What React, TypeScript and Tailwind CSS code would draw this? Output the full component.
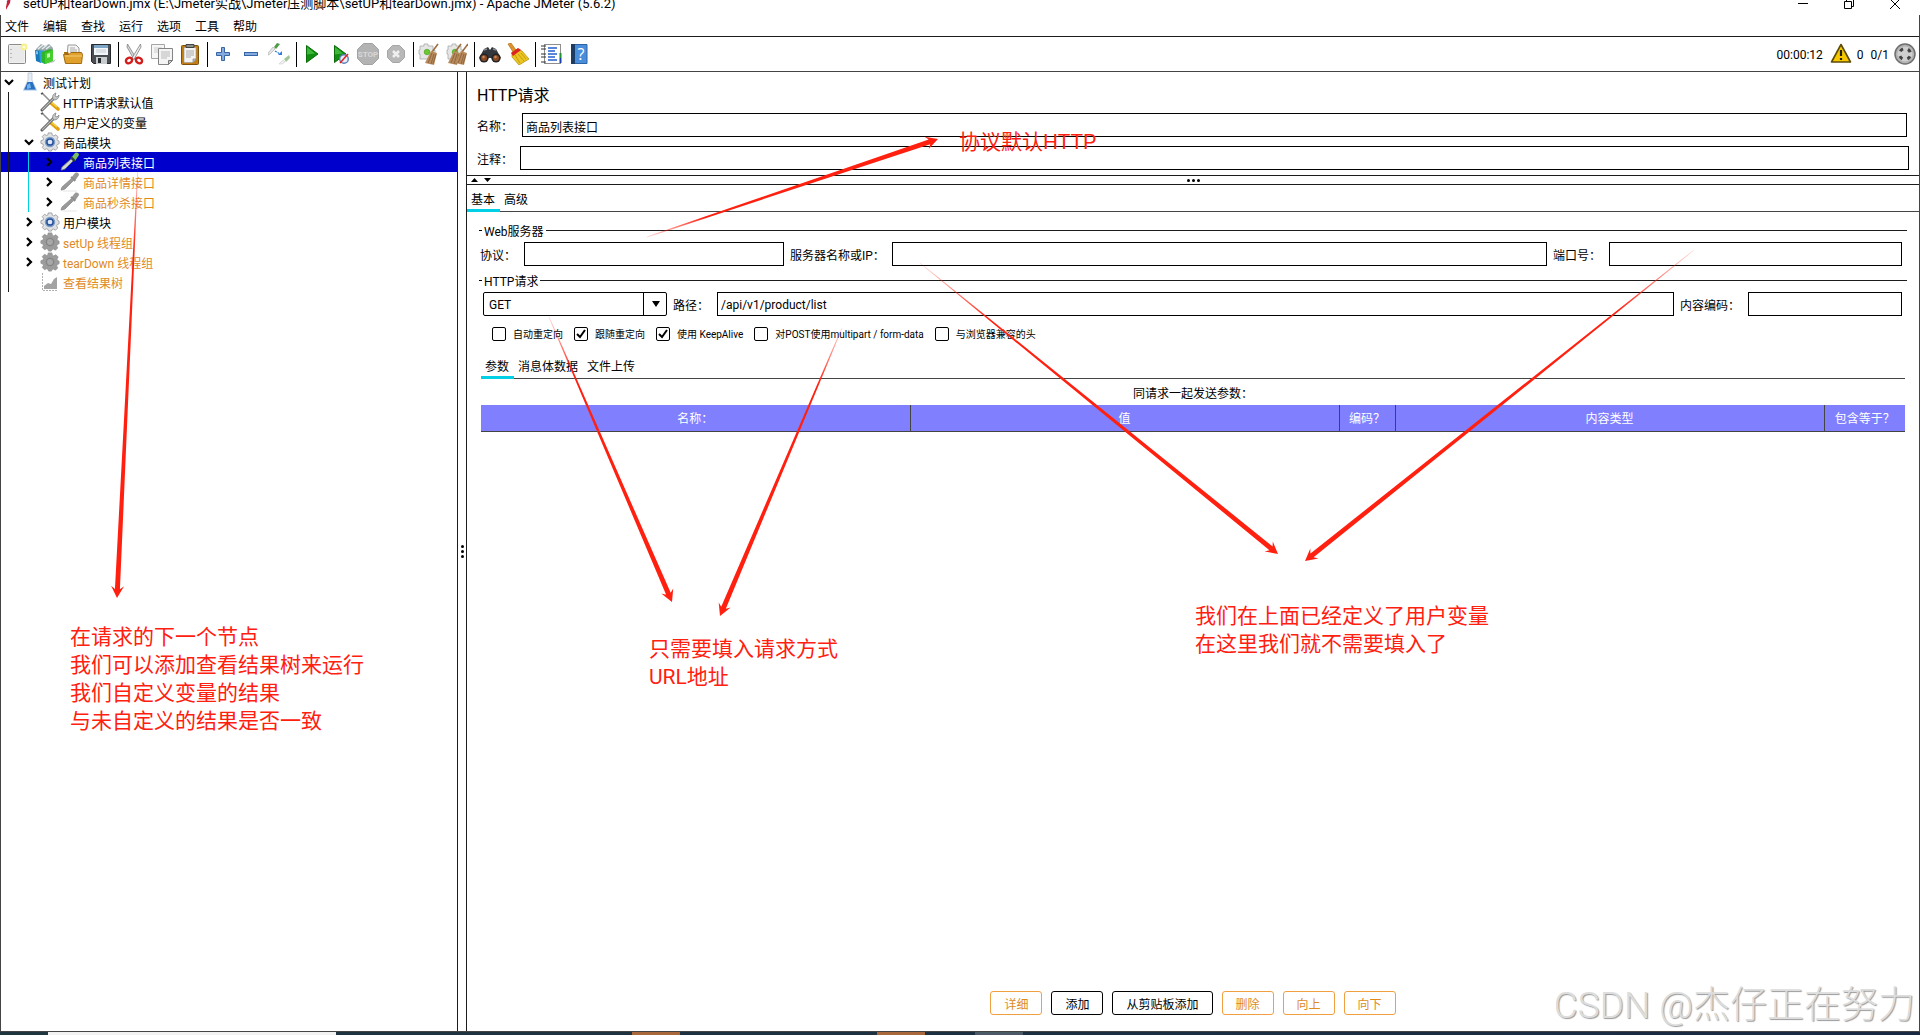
import React from 'react';
import clsx from 'clsx';

type IconProps = { children: React.ReactNode; size?: number; box?: string };

function Icon({ children, size = 22, box = '0 0 22 22' }: IconProps) {
  return (
    <svg width={size} height={size} viewBox={box} fill="none" aria-hidden="true" className="shrink-0">
      {children}
    </svg>
  );
}

/* ---------- toolbar icons ---------- */

const NewIcon = () => (
  <Icon>
    <rect x="2.5" y="1.5" width="17" height="19" rx="1" fill="#f0f0f0" stroke="#8a8a8a" />
    <path d="M4 3h14v16H4z" fill="#e9e9e9" />
    <path d="M5 6v1M5 10v1M5 14v1" stroke="#888" />
    <circle cx="18" cy="4" r="3.4" fill="#f7ef8a" />
    <circle cx="18" cy="4" r="1.6" fill="#fffde0" />
  </Icon>
);

const TemplatesIcon = () => (
  <Icon>
    <path d="M2 6l5-5 4 2 4-2 4 4v5H2z" fill="#9aa7ab" />
    <path d="M4 6l5-4M8 6l5-4M12 6l4-3" stroke="#e8eef0" strokeWidth="1.4" />
    <path d="M1 7l6 1v12l-5-2z" fill="#1878b8" />
    <path d="M2 8l2 .5v3L2 11z" fill="#7cc6ee" />
    <path d="M5 7l6 1v13l-5-2z" fill="#2f9fd8" />
    <path d="M8 9l8-3 3 1v11l-8 3-3-2z" fill="#2fb52a" />
    <path d="M11 10l8-3v11l-8 3z" fill="#45cf2c" />
    <path d="M13 11l3-1v4l-3 1z" fill="#c8f5b4" />
    <path d="M19 18l3-2-2 3-7 2z" fill="#bbb" />
  </Icon>
);

const OpenIcon = () => (
  <Icon>
    <path d="M6 2h8l3 3v9H5z" fill="#f4f4f4" stroke="#999" />
    <path d="M8 5h5M8 7h7M8 9h7" stroke="#aaa" />
    <path d="M2 9h4l1 2h12v9H3z" fill="#a8690b" />
    <path d="M1.5 11.5H7l2-2h10.500l1 2-1 9h-16z" fill="#dfa02c" stroke="#a36c10" />
    <path d="M3 13h17" stroke="#f4cd76" />
  </Icon>
);

const SaveIcon = () => (
  <Icon>
    <path d="M1.500 1.500h19v19h-17l-2-2z" fill="#4a4d52" stroke="#26282b" />
    <rect x="4" y="2" width="14" height="10" fill="#f3f6f8" />
    <rect x="4" y="2" width="14" height="3" fill="#7ea6c6" />
    <path d="M6 7h10M6 9h10" stroke="#c3ccd2" />
    <rect x="6" y="14" width="11" height="7" fill="#c9ccce" />
    <rect x="8" y="15" width="3" height="5" fill="#26282b" />
  </Icon>
);

const CutIcon = () => (
  <Icon>
    <path d="M4.500 1l8.500 14-2 1.500L4 4z" fill="#d5d7d8" stroke="#7d8083" strokeWidth=".8" />
    <path d="M17.500 1L9 15l2 1.500L18 4z" fill="#eceded" stroke="#7d8083" strokeWidth=".8" />
    <ellipse cx="6" cy="17.500" rx="3.200" ry="2.600" transform="rotate(-30 6 17.500)" stroke="#d41c1c" strokeWidth="2.400" />
    <ellipse cx="16" cy="17.500" rx="3.200" ry="2.600" transform="rotate(30 16 17.500)" stroke="#d41c1c" strokeWidth="2.400" />
  </Icon>
);

const CopyIcon = () => (
  <Icon>
    <path d="M.5 1.500h13v14H.5z" fill="#f6f6f6" stroke="#a5a5a5" />
    <path d="M3 5h8M3 7h8M3 9h8" stroke="#ccc" />
    <path d="M7.500 5.500h14v12l-4 4h-10z" fill="#f4f4f4" stroke="#858585" />
    <path d="M10 9h9M10 11h9M10 13h9M10 15h6" stroke="#b9b9b9" />
    <path d="M21.500 17.500l-4 4v-4z" fill="#ccc" stroke="#777" />
  </Icon>
);

const PasteIcon = () => (
  <Icon>
    <rect x="2.500" y="2.500" width="17" height="19" rx="1" fill="#c17d11" stroke="#7c5008" />
    <path d="M5 4.500h12v12l-3 3H5z" fill="#f4f4f4" stroke="#999" strokeWidth=".6" />
    <path d="M7 1.500h8v3H7z" fill="#8a8d88" stroke="#444" />
    <path d="M7 8h8M7 10h8M7 12h8M7 14h5" stroke="#aaa" />
    <path d="M17 16l-3 3.500V16z" fill="#c8c8c8" stroke="#777" strokeWidth=".6" />
  </Icon>
);

const PlusIcon = () => (
  <Icon>
    <path d="M9.500 4.500h3v5h5v3h-5v5h-3v-5h-5v-3h5z" fill="#86aadb" stroke="#3465a4" />
  </Icon>
);

const MinusIcon = () => (
  <Icon>
    <rect x="4.500" y="9.500" width="13" height="3" fill="#86aadb" stroke="#3465a4" />
  </Icon>
);

const ToggleIcon = () => (
  <Icon>
    <path d="M0 10l5-6 2 2-5 5-2 1z" fill="#e4e6e4" stroke="#a6a9a6" strokeWidth=".6" />
    <path d="M6 4l3-4 3 1-4 5z" fill="#4f9a45" />
    <path d="M11 21l4-4 2 2-3 2z" fill="#efefef" stroke="#ccc" strokeWidth=".6" />
    <path d="M16 16l5-4 1 3-4 4z" fill="#9cc694" />
    <path d="M7 8l5 3" stroke="#2c7be0" strokeWidth="1.200" strokeDasharray="2 1" />
    <path d="M10 12h4V8z" fill="#2c7be0" />
  </Icon>
);

const StartIcon = () => (
  <Icon>
    <path d="M5.500 2.500L17 11 5.500 19.500z" fill="#118d11" stroke="#0a6d0a" />
    <path d="M6 4l8 6.500-8 1z" fill="#3eb83a" />
  </Icon>
);

const StartNoTimersIcon = () => (
  <Icon>
    <path d="M5.500 2.500L17 11 5.500 19.500z" fill="#118d11" stroke="#0a6d0a" />
    <path d="M6 4l8 6.500-8 1z" fill="#3eb83a" />
    <circle cx="15" cy="16" r="4.300" fill="#e6eefb" stroke="#5b7fb5" strokeWidth="1.400" />
    <path d="M11 20l8-9" stroke="#e0241c" strokeWidth="1.500" />
  </Icon>
);

const StopIcon = () => (
  <Icon>
    <path d="M6.500.5h9l6 6v9l-6 6h-9l-6-6v-9z" fill="#b3b3b3" stroke="#a2a2a2" />
    <text x="11" y="14" textAnchor="middle" fontSize="8" fontWeight="700" fontFamily="Roboto, sans-serif" fill="#d8d8d8">
      STOP
    </text>
  </Icon>
);

const ShutdownIcon = () => (
  <Icon>
    <path d="M7.500 2.500h7l5 5v7l-5 5h-7l-5-5v-7z" fill="#b8b8b8" stroke="#a6a6a6" />
    <path d="M8 8l6 6M14 8l-6 6" stroke="#efefef" strokeWidth="2.600" />
  </Icon>
);

const broom = (
  <>
    <path d="M14 9l6-8" stroke="#9c6d3c" strokeWidth="1.600" />
    <path d="M13 8l6 2-3 12-9-2z" fill="#b98a5b" />
    <path d="M14 10l-4 10M16 11l-3 10M18 11l-3 10" stroke="#7d5630" strokeWidth=".7" />
  </>
);

const gearSheet = (
  <>
    <path d="M2 3h4V1h4v2h5v4h2v4h-2v5H2v-5H1V7h1z" fill="#e6e6e6" stroke="#aaa" strokeWidth=".8" />
    <circle cx="9" cy="9" r="2.800" fill="#6cc830" stroke="#3f9a18" strokeWidth=".6" />
  </>
);

const ClearIcon = () => (
  <Icon>
    {gearSheet}
    {broom}
  </Icon>
);

const ClearAllIcon = () => (
  <Icon>
    {gearSheet}
    <g transform="translate(-5 0)">{broom}</g>
    <g transform="translate(2 0)">{broom}</g>
  </Icon>
);

const SearchIcon = () => (
  <Icon>
    <path d="M5 6l4-2 2 3 2-3 4 2 5 9-5 3-5-3h-2l-5 3-5-3z" fill="#33363a" />
    <path d="M5 7l3-1M14 6l3 1" stroke="#83888d" strokeWidth="1.500" />
    <circle cx="5" cy="15" r="4.600" fill="#222427" />
    <circle cx="17" cy="15" r="4.600" fill="#222427" />
    <circle cx="5" cy="15" r="3" fill="#8c4a22" />
    <circle cx="17" cy="15" r="3" fill="#8c4a22" />
    <circle cx="4.500" cy="14" r="1.200" fill="#c98a5e" />
    <circle cx="16.500" cy="14" r="1.200" fill="#c98a5e" />
  </Icon>
);

const ResetSearchIcon = () => (
  <Icon>
    <path d="M1 1l3-1 5 7-3 2z" fill="#e0932a" stroke="#a5660f" strokeWidth=".6" />
    <path d="M5 9l6-3 4 2 7 8-10 6-7-8z" fill="#edc521" stroke="#b08a0a" strokeWidth=".7" />
    <path d="M8 12l5 8M11 11l6 7M14 10l5 6" stroke="#b8920e" strokeWidth=".8" />
    <path d="M4 10l7-5 3 2-8 6z" fill="#dc2323" />
  </Icon>
);

const FunctionIcon = () => (
  <Icon>
    <rect x="4.500" y="1.500" width="16" height="19" fill="#fff" stroke="#8e8e8e" />
    <path d="M20.500 10v5" stroke="#1d8f2e" strokeWidth="2" />
    <path d="M20.500 15v5" stroke="#163fb0" strokeWidth="2" />
    <path d="M8 5h9M8 11h9M8 17h9" stroke="#235fd0" strokeWidth="1.300" />
    <path d="M8 8h7M8 14h7" stroke="#235fd0" strokeWidth="1.300" />
    <path d="M1 3h5M1 6h5M1 11h5M1 14h5M1 19h5" stroke="#333" strokeWidth="1.200" />
  </Icon>
);

const HelpIcon = () => (
  <Icon>
    <rect x="3" y="1" width="16" height="20" fill="#4a8edb" />
    <rect x="3" y="1" width="4" height="20" fill="#1c3c66" />
    <path d="M7 1.500h12v19H7" stroke="#2b62a5" />
    <text x="13" y="17" textAnchor="middle" fontSize="16" fontFamily="Open Sans, sans-serif" fill="#fff">
      ?
    </text>
  </Icon>
);

const toolGroups: { label: string; icon: React.ReactNode; off?: boolean }[][] = [
  [
    { label: '新建', icon: <NewIcon /> },
    { label: '模板', icon: <TemplatesIcon /> },
    { label: '打开', icon: <OpenIcon /> },
    { label: '保存', icon: <SaveIcon /> },
  ],
  [
    { label: '剪切', icon: <CutIcon /> },
    { label: '复制', icon: <CopyIcon /> },
    { label: '粘贴', icon: <PasteIcon /> },
  ],
  [
    { label: '展开', icon: <PlusIcon /> },
    { label: '折叠', icon: <MinusIcon /> },
    { label: '切换', icon: <ToggleIcon /> },
  ],
  [
    { label: '启动', icon: <StartIcon /> },
    { label: '不停顿开始', icon: <StartNoTimersIcon /> },
    { label: '停止', icon: <StopIcon />, off: true },
    { label: '关闭', icon: <ShutdownIcon />, off: true },
  ],
  [
    { label: '清除', icon: <ClearIcon /> },
    { label: '清除全部', icon: <ClearAllIcon /> },
  ],
  [
    { label: '搜索', icon: <SearchIcon /> },
    { label: '重置搜索', icon: <ResetSearchIcon /> },
  ],
  [
    { label: '函数助手', icon: <FunctionIcon /> },
    { label: '帮助', icon: <HelpIcon /> },
  ],
];

/* ---------- tree icons ---------- */

const FlaskIcon = () => (
  <Icon size={20} box="0 0 20 20">
    <path d="M8 1h4v7l4 9H4l4-9z" fill="#e4edf6" stroke="#b5c0cc" strokeWidth=".7" />
    <path d="M7.500 10h5l3.500 8H4z" fill="#2a6fc0" />
    <path d="M7 13l3-2 1 5-4 1z" fill="#6fb2ee" />
    <path d="M3 18h14" stroke="#9cc3ea" />
  </Icon>
);

const ToolsIcon = () => (
  <Icon size={20} box="0 0 20 20">
    <path d="M2 1l9 9" stroke="#8f8f8f" strokeWidth="1.600" />
    <path d="M1 2l2-1" stroke="#555" strokeWidth="1.600" />
    <path d="M11 11l7 6" stroke="#e0a010" strokeWidth="3.600" strokeLinecap="round" />
    <path d="M11 10l6 5" stroke="#f8d548" strokeWidth="1.200" />
    <path d="M2 18L14 6" stroke="#555" strokeWidth="3" strokeLinecap="round" />
    <path d="M2 18L14 6" stroke="#b9bcbd" strokeWidth="1.300" />
    <path d="M13 7c-1-3 0-5 3-6l-1 3 2 1 2-2c0 3-2 5-5 5z" fill="#c9cccd" stroke="#777" strokeWidth=".7" />
  </Icon>
);

const gearPath =
  'M8 0h4l.6 2.600 1.600.7L16.500 2 19 4.500l-1.300 2.300.6 1.500L20 9v3l-2 .7-.7 1.600L18.500 16.500 16 19l-2.300-1.300-1.500.6L11.500 20h-3l-.8-2-1.500-.6L4 18.500 1.500 16l1.300-2.300-.6-1.500L0 11.500V8.600l2.300-.8.6-1.500L1.500 4 4 1.500l2.200 1.300 1.500-.6z';

const GearIcon = () => (
  <Icon size={20} box="-1 -1 22 22">
    <path d={gearPath} fill="#dfe1e3" stroke="#8a8d91" strokeWidth=".8" />
    <circle cx="10" cy="10" r="5" fill="#27539b" stroke="#7f9cc8" strokeWidth="1.500" />
    <circle cx="10" cy="10" r="2.600" fill="#dce8f8" />
  </Icon>
);

const GearOffIcon = () => (
  <Icon size={20} box="-1 -1 22 22">
    <path d={gearPath} fill="#9c9c9c" stroke="#8f8f8f" strokeWidth=".8" />
    <circle cx="10" cy="10" r="4" fill="#a8a8a8" stroke="#858585" strokeWidth="1.500" />
  </Icon>
);

const DropperIcon = ({ off = false }: { off?: boolean }) => (
  <Icon size={20} box="0 0 20 20">
    <path d="M1 18l1-3 9-8 2 2-8 8-3 1z" fill={off ? '#999' : '#d4d8d4'} stroke={off ? '#8c8c8c' : '#6f756f'} strokeWidth=".8" />
    <path d="M11 6l4-5c2-1 4 0 4 2l-4 6z" fill={off ? '#999' : '#7cbf62'} />
    <path d="M11 5l4 4" stroke={off ? '#8c8c8c' : '#2d4a26'} strokeWidth="2" />
    {off && <path d="M3 19h14" stroke="#e4e4e4" />}
  </Icon>
);

const ChartIcon = () => (
  <Icon size={20} box="0 0 20 20">
    <path d="M2.500 1v17.500H18" stroke="#b0b0b0" strokeDasharray="2 1" />
    <path d="M4 14l4-3 3 1 3-5 3-2v12H4z" fill="#a3a3a3" />
  </Icon>
);

type Node = {
  label: string;
  level: 0 | 1 | 2;
  icon: React.ReactNode;
  arrow?: 'open' | 'closed';
  disabled?: boolean;
  selected?: boolean;
};

const nodes: Node[] = [
  { label: '测试计划', level: 0, icon: <FlaskIcon />, arrow: 'open' },
  { label: 'HTTP请求默认值', level: 1, icon: <ToolsIcon /> },
  { label: '用户定义的变量', level: 1, icon: <ToolsIcon /> },
  { label: '商品模块', level: 1, icon: <GearIcon />, arrow: 'open' },
  { label: '商品列表接口', level: 2, icon: <DropperIcon />, arrow: 'closed', selected: true },
  { label: '商品详情接口', level: 2, icon: <DropperIcon off />, arrow: 'closed', disabled: true },
  { label: '商品秒杀接口', level: 2, icon: <DropperIcon off />, arrow: 'closed', disabled: true },
  { label: '用户模块', level: 1, icon: <GearIcon />, arrow: 'closed' },
  { label: 'setUp 线程组', level: 1, icon: <GearOffIcon />, arrow: 'closed', disabled: true },
  { label: 'tearDown 线程组', level: 1, icon: <GearOffIcon />, arrow: 'closed', disabled: true },
  { label: '查看结果树', level: 1, icon: <ChartIcon />, disabled: true },
];

const levelPad = ['pl-0', 'pl-5', 'pl-10'];

function Tree() {
  return (
    <ul className="relative">
      {nodes.map((n) => (
        <li
          key={n.label}
          className={clsx(
            'flex h-5 items-center gap-[3px]',
            levelPad[n.level],
            n.selected && 'bg-[#0000cc] text-white',
            n.disabled && 'text-[#e08a1e]'
          )}
        >
          <span className="flex w-4 justify-center">
            {n.arrow && (
              <svg width="10" height="10" viewBox="0 0 10 10" fill="none" stroke="#000" strokeWidth="2.200">
                <path d={n.arrow === 'open' ? 'M1 3l4 4 4-4' : 'M3 1l4 4-4 4'} />
              </svg>
            )}
          </span>
          {n.icon}
          <span className="pt-[3px] whitespace-nowrap">{n.label}</span>
        </li>
      ))}
      <li aria-hidden="true" className="absolute top-5 bottom-0 left-[7px] w-px bg-[#1c1c1c]" />
      <li aria-hidden="true" className="absolute top-20 left-[27px] h-[60px] w-px bg-[#00d0e0]" />
    </ul>
  );
}

/* ---------- form parts ---------- */

const field = 'h-6 min-w-0 border border-black bg-white px-[3px] pt-0.5 outline-none';
const caption = 'pt-[3px] whitespace-nowrap';

function Tabs({ items }: { items: string[] }) {
  return (
    <div role="tablist" className="flex h-[27px] border-b border-[#444444]">
      {items.map((t, i) => (
        <button
          key={t}
          role="tab"
          aria-selected={i === 0}
          className={clsx(
            'h-[27px] border-b-3 pt-1.5 pr-[5px] pl-1 leading-[18px]',
            i === 0 ? 'border-[#00d0e6]' : 'border-transparent'
          )}
        >
          {t}
        </button>
      ))}
    </div>
  );
}

function Group({ title, children }: { title: string; children: React.ReactNode }) {
  return (
    <fieldset className="mb-1.5 min-w-0">
      <legend className="flex h-[17px] w-full items-center gap-0.5">
        <span className="h-px w-[3px] bg-black" />
        <span className="pt-[3px] leading-[17px]">{title}</span>
        <span className="h-px flex-1 bg-[#1c1c1c]" />
      </legend>
      <div className="flex items-center pt-[3px] pr-[5px] pl-px">{children}</div>
    </fieldset>
  );
}

function Check({ label, checked = false }: { label: string; checked?: boolean }) {
  return (
    <label className="flex items-center gap-[7px]">
      <span className="relative h-[14px] w-[14px]">
        <input
          type="checkbox"
          defaultChecked={checked}
          className="peer block h-[14px] w-[14px] appearance-none rounded-[2px] border border-black"
        />
        <svg
          viewBox="0 0 14 14"
          className="pointer-events-none absolute inset-0 hidden peer-checked:block"
          fill="none"
          stroke="#000"
          strokeWidth="2"
        >
          <path d="M3 7l3 3 5-7" />
        </svg>
      </span>
      <span className="pt-0.5 text-[10px] whitespace-nowrap">{label}</span>
    </label>
  );
}

function RequestForm() {
  return (
    <div className="pt-[10px] pr-3 pl-3">
      <Group title="Web服务器">
        <label htmlFor="protocol" className={clsx(caption, 'w-11')}>协议：</label>
        <input id="protocol" className={clsx(field, 'flex-[252]')} />
        <label htmlFor="server" className={clsx(caption, 'w-[108px] pl-1.5')}>服务器名称或IP：</label>
        <input id="server" className={clsx(field, 'flex-[647]')} />
        <label htmlFor="port" className={clsx(caption, 'w-[62px] pl-1.5')}>端口号：</label>
        <input id="port" className={clsx(field, 'flex-[285]')} />
      </Group>
      <Group title="HTTP请求">
        <span className="relative ml-[3px] w-[184px]">
          <select
            aria-label="请求方法"
            defaultValue="GET"
            className="block h-6 w-full appearance-none rounded-[2px] border border-black bg-white pt-0.5 pl-[5px]"
          >
            <option>GET</option>
            <option>POST</option>
          </select>
          <span className="pointer-events-none absolute inset-y-0 right-0 flex w-6 items-center justify-center border-l border-black">
            <svg width="10" height="6" viewBox="0 0 10 6">
              <path d="M1 0h8L5 6z" />
            </svg>
          </span>
        </span>
        <label htmlFor="path" className={clsx(caption, 'w-[50px] pl-1.5')}>路径：</label>
        <input id="path" defaultValue="/api/v1/product/list" className={clsx(field, 'flex-[949]')} />
        <label htmlFor="encoding" className={clsx(caption, 'w-[74px] pl-1.5')}>内容编码：</label>
        <input id="encoding" className={clsx(field, 'flex-[146]')} />
      </Group>

      <div className="mt-[11px] mb-[11px] flex h-[14px] items-center gap-[11px] pl-[13px]">
        <Check label="自动重定向" />
        <Check label="跟随重定向" checked />
        <Check label="使用 KeepAlive" checked />
        <Check label="对POST使用multipart / form-data" />
        <Check label="与浏览器兼容的头" />
      </div>

      <div className="pr-0.5 pl-0.5">
        <Tabs items={['参数', '消息体数据', '文件上传']} />
        <table className="w-full table-fixed border-collapse">
          <caption className="h-[26px] pt-1.5">同请求一起发送参数：</caption>
          <colgroup>
            <col />
            <col />
            <col className="w-14" />
            <col />
            <col className="w-[81px]" />
          </colgroup>
          <thead>
            <tr className="h-[26px] border-b border-[#444444] bg-[#8080ff] text-white">
              {['名称：', '值', '编码？', '内容类型', '包含等于？'].map((h) => (
                <th key={h} scope="col" className="border-r border-[#444444] p-0 pt-[3px] font-normal last:border-r-0">
                  {h}
                </th>
              ))}
            </tr>
          </thead>
        </table>
      </div>
    </div>
  );
}

function RequestPanel() {
  return (
    <main className="flex min-w-0 flex-1 flex-col border-l border-[#1c1c1c]">
      <div className="flex flex-col pt-[10px] pb-[5px] pl-[10px]">
        <h1 className="mb-[5px] pt-0.5 text-[16px] leading-6">HTTP请求</h1>
        <div className="mb-[9px] flex items-center pr-3">
          <label htmlFor="name" className={clsx(caption, 'w-[45px]')}>名称：</label>
          <input id="name" defaultValue="商品列表接口" className={clsx(field, 'flex-1')} />
        </div>
        <div className="flex items-center pr-[10px]">
          <label htmlFor="comment" className={clsx(caption, 'w-[43px]')}>注释：</label>
          <input id="comment" className={clsx(field, 'flex-1')} />
        </div>
      </div>

      <div className="flex h-[10px] items-center border-y border-[#1c1c1c] px-1">
        <div className="flex flex-1 gap-1.5">
          <svg width="7" height="4" viewBox="0 0 7 4"><path d="M0 4h7L3.500 0z" /></svg>
          <svg width="7" height="4" viewBox="0 0 7 4"><path d="M0 0h7L3.500 4z" /></svg>
        </div>
        <div className="flex gap-0.5">
          <span className="h-[3px] w-[3px] rounded-full bg-black" />
          <span className="h-[3px] w-[3px] rounded-full bg-black" />
          <span className="h-[3px] w-[3px] rounded-full bg-black" />
        </div>
        <div className="flex-1" />
      </div>

      <Tabs items={['基本', '高级']} />
      <RequestForm />

      <div className="mt-auto mb-4 flex justify-center gap-[9px]">
        {[
          { t: '详细', off: true },
          { t: '添加' },
          { t: '从剪贴板添加' },
          { t: '删除', off: true },
          { t: '向上', off: true },
          { t: '向下', off: true },
        ].map((b) => (
          <button
            key={b.t}
            disabled={b.off}
            className={clsx(
              'h-6 rounded-[3px] border px-[13px] pt-[3px]',
              b.off ? 'border-[#f0a040] text-[#e08a1e]' : 'border-black'
            )}
          >
            {b.t}
          </button>
        ))}
      </div>
    </main>
  );
}

/* ---------- red notes laid over the window ---------- */

const arrows: [number, number, number, number][] = [
  [138, 165, 117, 598],
  [647, 237, 938, 139],
  [549, 317, 672, 602],
  [842, 328, 720, 616],
  [920, 263, 1278, 554],
  [1694, 250, 1305, 561],
];

function Arrow({ from, to, id }: { from: [number, number]; to: [number, number]; id: string }) {
  const dx = to[0] - from[0];
  const dy = to[1] - from[1];
  const len = Math.hypot(dx, dy);
  const angle = (Math.atan2(dy, dx) * 180) / Math.PI;
  const neck = len - 9;
  return (
    <g transform={`translate(${from[0]} ${from[1]}) rotate(${angle})`}>
      <defs>
        <linearGradient id={id} gradientUnits="userSpaceOnUse" x1="0" y1="0" x2={len} y2="0">
          <stop offset="0" stopColor="#ff2010" stopOpacity="0.15" />
          <stop offset="0.2" stopColor="#ff2010" />
        </linearGradient>
      </defs>
      <path
        fill={`url(#${id})`}
        d={`M0 -.4L${neck} -2.500L${len - 12} -6.500L${len} 0L${len - 12} 6.500L${neck} 2.500L0 .4z`}
      />
    </g>
  );
}

const note = 'absolute whitespace-nowrap text-[21px] leading-7 text-[#ff2010]';

function Notes() {
  return (
    <div className="pointer-events-none absolute inset-0">
      <svg className="absolute inset-0 h-full w-full">
        {arrows.map(([x1, y1, x2, y2], i) => (
          <Arrow key={i} id={`arrow${i}`} from={[x1, y1]} to={[x2, y2]} />
        ))}
      </svg>
      <p className={clsx(note, 'top-[128px] left-[959px]')}>协议默认HTTP</p>
      <p className={clsx(note, 'top-[623px] left-[70px]')}>
        在请求的下一个节点<br />
        我们可以添加查看结果树来运行<br />
        我们自定义变量的结果<br />
        与未自定义的结果是否一致
      </p>
      <p className={clsx(note, 'top-[635px] left-[649px]')}>
        只需要填入请求方式<br />
        URL地址
      </p>
      <p className={clsx(note, 'top-[602px] left-[1195px]')}>
        我们在上面已经定义了用户变量<br />
        在这里我们就不需要填入了
      </p>
      <p className="absolute right-[5px] bottom-0.5 text-[37px] leading-[54px] font-light whitespace-nowrap text-[#dddddd] [text-shadow:1px_1px_1px_#999999]">
        CSDN @杰仔正在努力
      </p>
    </div>
  );
}

/* ---------- window ---------- */

function TitleBar() {
  return (
    <div className="-mt-[7px] flex h-[22px] shrink-0 items-center">
      <svg width="23" height="22" viewBox="0 0 23 22" className="shrink-0">
        <path d="M6 14l1-5 4-6-1 7-3 5-1 2z" fill="#c8203c" />
        <path d="M7 9l3-5" stroke="#7a2a78" />
      </svg>
      <span className="flex-1 text-[13px] whitespace-nowrap">
        setUP和tearDown.jmx (E:\Jmeter实战\Jmeter压测脚本\setUP和tearDown.jmx) - Apache JMeter (5.6.2)
      </span>
      <div className="flex pr-0.5 text-black">
        {[
          { label: '最小化', d: 'M0 4.500h10' },
          { label: '还原', d: 'M.5 2.500h7v7h-7zM2.500 2.500v-2h7v7h-2' },
          { label: '关闭', d: 'M0 0l10 10M10 0L0 10' },
        ].map((c) => (
          <button key={c.label} aria-label={c.label} className="flex w-[46px] justify-center">
            <svg width="10" height="10" viewBox="0 0 10 10" fill="none" stroke="#000">
              <path d={c.d} />
            </svg>
          </button>
        ))}
      </div>
    </div>
  );
}

function Toolbar() {
  return (
    <div className="flex h-[35px] shrink-0 items-center border-b border-[#444444] pl-0.5">
      {toolGroups.map((group, gi) => (
        <React.Fragment key={gi}>
          {gi > 0 && <span className="mr-px ml-[3px] h-[25px] w-px bg-black" />}
          {group.map((tool) => (
            <button key={tool.label} aria-label={tool.label} disabled={tool.off} className="flex w-7 justify-center">
              {tool.icon}
            </button>
          ))}
        </React.Fragment>
      ))}
      <div className="ml-auto flex items-center pr-[3px]">
        <span className="pt-0.5">00:00:12</span>
        <button aria-label="日志" className="mr-[5px] ml-[7px]">
          <Icon>
            <path d="M11 1.500L20.500 19h-19z" fill="#f7c800" stroke="#5c4a08" strokeWidth="1.600" strokeLinejoin="round" />
            <path d="M11 7v6M11 15v2" stroke="#222" strokeWidth="2.200" />
          </Icon>
        </button>
        <span className="mr-[7px] pt-0.5">0</span>
        <span className="mr-[5px] pt-0.5">0/1</span>
        <Icon>
          <circle cx="11" cy="11" r="10" fill="#b4b4b4" stroke="#6f6f6f" strokeWidth="1.500" />
          <circle cx="11" cy="11" r="7.500" fill="#cfcfcf" />
          <circle
            cx="11"
            cy="11"
            r="5.500"
            stroke="#444"
            strokeWidth="3"
            strokeDasharray="3.600 5.040"
            transform="rotate(26 11 11)"
          />
        </Icon>
      </div>
    </div>
  );
}

export default function App() {
  return (
    <div className="relative flex h-screen flex-col overflow-hidden bg-white font-['Roboto','Noto_Sans_CJK_SC',sans-serif] text-[12px] leading-[18px] text-black">
      <TitleBar />
      <div className="flex min-h-0 flex-1 flex-col border-x border-b border-[#444444]">
        <nav className="flex h-[22px] shrink-0 items-center gap-3.5 border-b border-[#1c1c1c] pl-1">
          {['文件', '编辑', '查找', '运行', '选项', '工具', '帮助'].map((m) => (
            <button key={m} className="pt-[3px]">{m}</button>
          ))}
        </nav>
        <Toolbar />
        <div className="flex min-h-0 flex-1">
          <aside className="w-[457px] shrink-0 border-r border-[#1c1c1c]">
            <Tree />
          </aside>
          <div className="flex w-2 shrink-0 flex-col items-center justify-center gap-0.5">
            <span className="h-[3px] w-[3px] rounded-full bg-black" />
            <span className="h-[3px] w-[3px] rounded-full bg-black" />
            <span className="h-[3px] w-[3px] rounded-full bg-black" />
          </div>
          <RequestPanel />
        </div>
      </div>
      <div className="flex h-[3px] shrink-0 bg-gradient-to-r from-[#20363f] to-[#1a2942]">
        <span className="ml-12 w-72 bg-[#f2f2f2]" />
        <span className="ml-[296px] w-12 bg-[#a8683c]" />
        <span className="ml-[197px] w-12 bg-[#a8683c]" />
        <span className="ml-[50px] w-12 bg-[#4c5a68]" />
      </div>
      <Notes />
    </div>
  );
}
